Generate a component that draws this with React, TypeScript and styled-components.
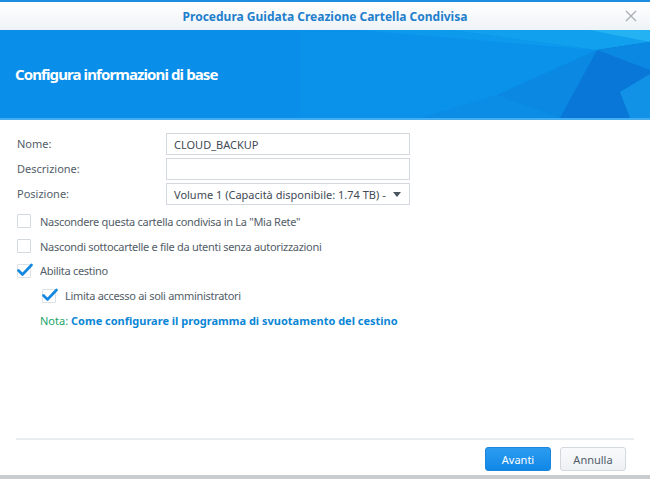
import React from "react";
import styled, { createGlobalStyle } from "styled-components";

const colors = {
  text: "#535d68",
  linkBlue: "#0b86d6",
  green: "#1aa56a",
  border: "#d3d9df",
};

const GlobalStyle = createGlobalStyle`
  html, body {
    margin: 0;
    padding: 0;
    background: #ffffff;
  }
  body {
    font-family: "Noto Sans", "DejaVu Sans", sans-serif;
  }
`;

const CheckIcon = () => (
  <svg width="16" height="14" viewBox="0 0 16 14">
    <path d="M1.5 7.5 L5.5 11.5 L14.5 2" fill="none" stroke="#1288e0" strokeWidth="2.6" strokeLinecap="round" strokeLinejoin="round" />
  </svg>
);

// faceted background art on the right side of the banner
const Facets = () => (
  <svg width="350" height="88" viewBox="0 0 350 88" preserveAspectRatio="none">
    <polygon points="0,0 150,0 297,20 197,65 120,88 0,88" fill="#0a92ea" />
    <polygon points="150,0 350,0 350,12 297,20" fill="#10a0ee" />
    <polygon points="290,0 350,0 350,12" fill="#24b2f3" />
    <polygon points="60,0 150,0 297,20 200,12" fill="#0d99ec" />
    <polygon points="297,20 197,65 260,88" fill="#0a88e2" />
    <polygon points="197,65 120,88 260,88" fill="#0b8de5" />
    <polygon points="297,20 350,12 350,88 260,88" fill="#0877d8" />
    <polygon points="297,20 350,12 350,40" fill="#0b88e1" />
    <polygon points="320,62 350,44 350,88 330,88" fill="#1192e6" />
  </svg>
);

const App = () => (
  <>
    <GlobalStyle />
    <Window>
      <TitleBar>
        <span className="title">Procedura Guidata Creazione Cartella Condivisa</span>
        <CloseButton aria-label="close">
          <svg width="12" height="12" viewBox="0 0 12 12">
            <path d="M1 1 L11 11 M11 1 L1 11" stroke="#a9b0b7" strokeWidth="1.4" />
          </svg>
        </CloseButton>
      </TitleBar>
      <Banner>
        <BannerArt>
          <Facets />
        </BannerArt>
        <BannerTitle>Configura informazioni di base</BannerTitle>
      </Banner>
      <Form>
        <FieldGrid>
          <Label>Nome:</Label>
          <TextBox>CLOUD_BACKUP</TextBox>
          <Label>Descrizione:</Label>
          <TextBox />
          <Label>Posizione:</Label>
          <TextBox>
            <span>Volume 1 (Capacità disponibile: 1.74 TB) -</span>
            <Caret />
          </TextBox>
        </FieldGrid>
        <CheckRow>
          <Box />
          <span>Nascondere questa cartella condivisa in La "Mia Rete"</span>
        </CheckRow>
        <CheckRow>
          <Box />
          <span>Nascondi sottocartelle e file da utenti senza autorizzazioni</span>
        </CheckRow>
        <CheckRow>
          <Box $checked>
            <CheckIcon />
          </Box>
          <span>Abilita cestino</span>
        </CheckRow>
        <CheckRow $indent>
          <Box $checked>
            <CheckIcon />
          </Box>
          <span>Limita accesso ai soli amministratori</span>
        </CheckRow>
        <Note>
          <span className="note__label">Nota: </span>
          <span className="note__link">Come configurare il programma di svuotamento del cestino</span>
        </Note>
      </Form>
      <Footer>
        <Button $primary>Avanti</Button>
        <Button>Annulla</Button>
      </Footer>
    </Window>
  </>
);

export default App;

const Window = styled.div`
  width: 650px;
  height: 479px;
  display: flex;
  flex-direction: column;
  box-sizing: border-box;
  border-top: 2px solid #1d8de2;
  border-bottom: 4px solid #c9cccf;
  background: #ffffff;
  font-size: 11px;
  color: ${colors.text};
  overflow: hidden;
`;

const TitleBar = styled.div`
  position: relative;
  height: 28px;
  flex: none;
  display: flex;
  align-items: center;
  justify-content: center;
  background: linear-gradient(#ffffff, #eef3f7);

  & .title {
    font-size: 12px;
    font-weight: 700;
    color: #1f7fcc;
  }
`;

const CloseButton = styled.div`
  position: absolute;
  right: 13px;
  top: 8px;
  width: 12px;
  height: 12px;
  display: flex;
`;

const Banner = styled.div`
  position: relative;
  height: 88px;
  flex: none;
  display: flex;
  align-items: center;
  padding: 0 16px;
  background: #098ee9;
  border-bottom: 2px solid #45aef1;
`;

const BannerTitle = styled.h1`
  position: relative;
  margin: 0 0 0 -1px;
  font-size: 15px;
  font-weight: 700;
  letter-spacing: -0.9px;
  color: #ffffff;
`;

const BannerArt = styled.div`
  position: absolute;
  right: 0;
  top: 0;
  width: 350px;
  height: 88px;
`;

const Form = styled.div`
  flex: 1;
  display: flex;
  flex-direction: column;
  padding: 13px 16px 0 17px;
`;

const FieldGrid = styled.div`
  display: grid;
  grid-template-columns: 149px 244px;
  row-gap: 3px;
  align-items: center;
  margin-bottom: 4px;
`;

const Label = styled.div`
  line-height: 22px;
`;

const TextBox = styled.div`
  height: 22px;
  box-sizing: border-box;
  border: 1px solid ${colors.border};
  display: flex;
  align-items: center;
  justify-content: space-between;
  padding: 0 8px 0 7px;
  color: #3f4a55;
  white-space: nowrap;
`;

const Caret = styled.span`
  width: 0;
  height: 0;
  border-left: 4px solid transparent;
  border-right: 4px solid transparent;
  border-top: 5px solid #4a545e;
`;

const CheckRow = styled.div<{ $indent?: boolean }>`
  height: 24.8px;
  display: flex;
  align-items: center;
  gap: 9px;
  letter-spacing: -0.3px;
  padding-left: ${(p) => (p.$indent ? "25px" : "0")};
`;

const Box = styled.span<{ $checked?: boolean }>`
  position: relative;
  flex: none;
  width: 14px;
  height: 14px;
  box-sizing: border-box;
  border: 1px solid ${(p) => (p.$checked ? "#dde2e6" : colors.border)};
  border-radius: 1px;
  background: #ffffff;

  & svg {
    position: absolute;
    left: -1px;
    top: -2px;
  }
`;

const Note = styled.div`
  height: 24.8px;
  display: flex;
  align-items: center;
  padding-left: 23px;
  white-space: pre;

  & .note__label {
    color: ${colors.green};
  }
  & .note__link {
    color: ${colors.linkBlue};
    font-weight: 700;
  }
`;

const Footer = styled.div`
  flex: none;
  margin: 0 16px;
  border-top: 2px solid #e9ecee;
  display: flex;
  justify-content: flex-end;
  align-items: flex-start;
  gap: 9px;
  padding: 7px 8px 4px 0;
`;

const Button = styled.div<{ $primary?: boolean }>`
  width: 66px;
  height: 24px;
  box-sizing: border-box;
  display: flex;
  align-items: center;
  justify-content: center;
  border-radius: 3px;
  font-size: 11px;
  border: 1px solid ${(p) => (p.$primary ? "#1a86dc" : "#d3d8dd")};
  background: ${(p) => (p.$primary ? "linear-gradient(#2c9cf0, #1187e6)" : "linear-gradient(#f8fafb, #eef1f4)")};
  color: ${(p) => (p.$primary ? "#ffffff" : "#515c67")};
`;
